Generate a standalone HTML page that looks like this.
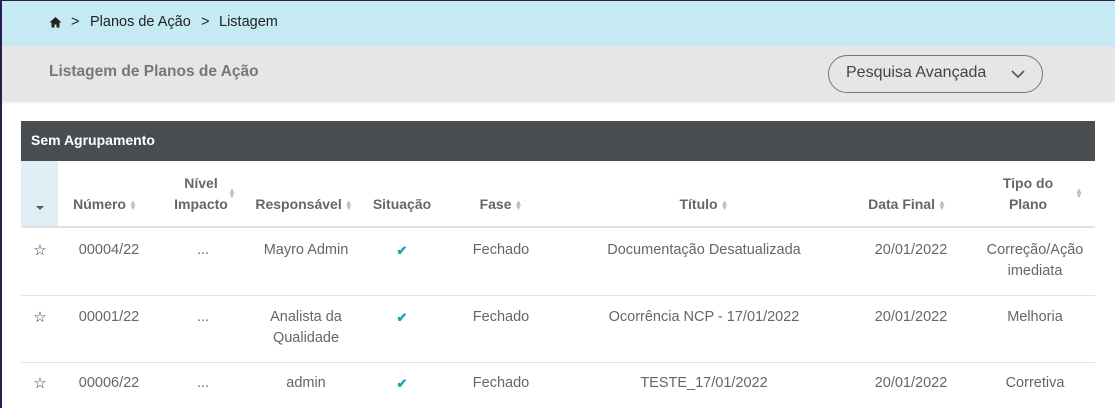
<!DOCTYPE html>
<html><head><meta charset="utf-8"><style>
*{margin:0;padding:0;box-sizing:border-box}
body{width:1115px;height:408px;overflow:hidden;background:#fff;font-family:"Liberation Sans",sans-serif;font-size:14.5px;color:#666;position:relative}
.a{position:absolute}
.c{position:absolute;width:200px;text-align:center;line-height:21px}
.h{font-weight:bold;color:#666;font-size:14px}
.s{display:inline-block;font-size:8px;color:#bbb;vertical-align:middle;line-height:5px;margin-left:3px}
.ck{color:#1ba3b5;font-weight:bold;font-size:13px}
.b{position:absolute;top:14px;color:#222;font-size:14.5px}
</style></head><body>
<div class="a" style="left:0;top:0;width:1115px;height:46px;background:#c5eaf3;border-top:1px solid #2d1a4f;border-left:2px solid #2d1a4f"></div>
<div class="a" style="left:0;top:46px;width:1115px;height:54px;background:#e6e6e6;border-left:2px solid #2d1a4f;box-shadow:0 2px 3px rgba(0,0,0,.12)"></div>
<div class="a" style="left:0;top:100px;width:2px;height:308px;background:#2d1a4f"></div>
<svg class="a" style="left:49px;top:16px" width="13" height="12" viewBox="0 0 13 12"><path d="M6.5 1L0.5 6.5h2v5h3v-3h2v3h3v-5h2z" fill="#222"/></svg>
<div class="b" style="left:71px">&gt;</div>
<div class="b" style="left:90px">Planos de Ação</div>
<div class="b" style="left:201px">&gt;</div>
<div class="b" style="left:219px">Listagem</div>
<div class="a" style="left:49px;top:63px;font-weight:bold;font-size:15.5px;color:#777">Listagem de Planos de Ação</div>
<div class="a" style="left:828px;top:55px;width:215px;height:38px;border:1.5px solid #777;border-radius:19px;color:#444;font-size:16px;padding:8px 0 0 17px">Pesquisa Avançada<svg class="a" style="left:182px;top:14px" width="14" height="9" viewBox="0 0 14 9"><path d="M1 1l6 6 6-6" fill="none" stroke="#555" stroke-width="1.6"/></svg></div>
<div class="a" style="left:21px;top:121px;width:1074px;height:40px;background:#4a4d50;color:#fff;font-weight:bold;padding:11px 0 0 10px;font-size:14px">Sem Agrupamento</div>
<div class="a" style="left:21px;top:161px;width:37px;height:66px;background:#e2eef6"></div>
<div class="a" style="left:36px;top:206px;width:0;height:0;border-left:4px solid transparent;border-right:4px solid transparent;border-top:4px solid #555"></div>
<div class="a" style="left:21px;top:226px;width:1074px;height:2px;background:#dde2e6"></div>
<div class="a" style="left:21px;top:295px;width:1074px;height:1px;background:#e2e2e2"></div>
<div class="a" style="left:21px;top:362px;width:1074px;height:1px;background:#e2e2e2"></div>

<div class="c h" style="left:5px;top:194px">Número<span class="s">▲<br>▼</span></div>
<div class="c h" style="left:101px;top:173px">Nível<br>Impacto</div><span class="s a" style="left:225px;top:188px">▲<br>▼</span>
<div class="c h" style="left:204px;top:194px">Responsável<span class="s">▲<br>▼</span></div>
<div class="c h" style="left:302px;top:194px">Situação</div>
<div class="c h" style="left:401px;top:194px">Fase<span class="s">▲<br>▼</span></div>
<div class="c h" style="left:604px;top:194px">Título<span class="s">▲<br>▼</span></div>
<div class="c h" style="left:807px;top:194px">Data Final<span class="s">▲<br>▼</span></div>
<div class="c h" style="left:928px;top:173px">Tipo do<br>Plano</div><span class="s a" style="left:1072px;top:188px">▲<br>▼</span>

<div class="c" style="left:-60px;top:240px;color:#333;font-size:15px">☆</div>
<div class="c" style="left:9px;top:240px">00004/22</div>
<div class="c" style="left:103px;top:240px">...</div>
<div class="c" style="left:206px;top:240px">Mayro Admin</div>
<div class="c ck" style="left:302px;top:240px">✔</div>
<div class="c" style="left:401px;top:240px">Fechado</div>
<div class="c" style="left:604px;top:240px">Documentação Desatualizada</div>
<div class="c" style="left:811px;top:240px">20/01/2022</div>
<div class="c" style="left:935px;top:240px">Correção/Ação<br>imediata</div>

<div class="c" style="left:-60px;top:307px;color:#333;font-size:15px">☆</div>
<div class="c" style="left:9px;top:307px">00001/22</div>
<div class="c" style="left:103px;top:307px">...</div>
<div class="c" style="left:206px;top:307px">Analista da<br>Qualidade</div>
<div class="c ck" style="left:302px;top:307px">✔</div>
<div class="c" style="left:401px;top:307px">Fechado</div>
<div class="c" style="left:604px;top:307px">Ocorrência NCP - 17/01/2022</div>
<div class="c" style="left:811px;top:307px">20/01/2022</div>
<div class="c" style="left:935px;top:307px">Melhoria</div>

<div class="c" style="left:-60px;top:373px;color:#333;font-size:15px">☆</div>
<div class="c" style="left:9px;top:373px">00006/22</div>
<div class="c" style="left:103px;top:373px">...</div>
<div class="c" style="left:206px;top:373px">admin</div>
<div class="c ck" style="left:302px;top:373px">✔</div>
<div class="c" style="left:401px;top:373px">Fechado</div>
<div class="c" style="left:604px;top:373px">TESTE_17/01/2022</div>
<div class="c" style="left:811px;top:373px">20/01/2022</div>
<div class="c" style="left:935px;top:373px">Corretiva</div>
</body></html>
